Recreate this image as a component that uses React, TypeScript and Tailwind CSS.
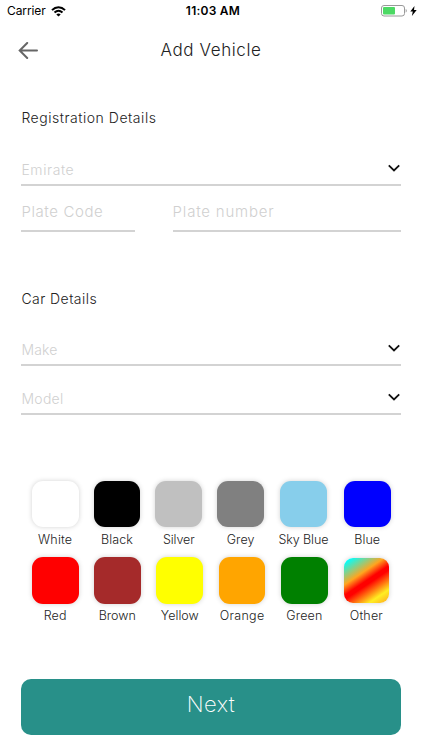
import React from 'react';
import clsx from 'clsx';

type Swatch = {
  name: string;
  color: string;
  // gap to the previous swatch
  gap?: string;
  size?: string;
  label?: string;
};

const firstRow: Swatch[] = [
  { name: 'White', color: 'bg-white' },
  { name: 'Black', color: 'bg-black', gap: 'ml-[15px]', label: 'tracking-[0.05px]' },
  { name: 'Silver', color: 'bg-[#c0c0c0]', gap: 'ml-[15px]', label: 'tracking-[-0.1px]' },
  { name: 'Grey', color: 'bg-[#808080]', gap: 'ml-[15px]', label: 'tracking-[0px]' },
  { name: 'Sky Blue', color: 'bg-[#87ceeb]', gap: 'ml-[16px]', label: 'tracking-[-0.1px]' },
  { name: 'Blue', color: 'bg-[#0000ff]', gap: 'ml-[17px]', label: 'tracking-[0px]' },
];

const secondRow: Swatch[] = [
  { name: 'Red', color: 'bg-[#ff0000]' },
  { name: 'Brown', color: 'bg-[#a52a2a]', gap: 'ml-[15.3px]', label: 'tracking-[0px]' },
  { name: 'Yellow', color: 'bg-[#ffff00]', gap: 'ml-[15.7px]', label: 'tracking-[0px]' },
  { name: 'Orange', color: 'bg-[#ffa500]', gap: 'ml-[15.5px]', label: 'tracking-[0.3px]' },
  { name: 'Green', color: 'bg-[#008000]', gap: 'ml-[15.5px]', label: 'tracking-[0.15px]' },
  {
    name: 'Other',
    color: 'bg-[linear-gradient(146deg,#00ffff_6%,#ffa51f_36%,#ff0000_50%,#ff0000_56%,#ffee22_82%,#ffa51f_100%)]',
    gap: 'ml-[16.4px]',
    size: 'w-[44.5px] h-[44.5px] mt-[1px] rounded-[9px]',
    label: 'tracking-[0.2px]',
  },
];

function Chevron() {
  return (
    <svg className="w-3 h-2 mr-[1px]" viewBox="0 0 12 8" fill="none" stroke="#111" strokeWidth="1.8">
      <path d="M.8 1.3 6 6.5l5.2-5.2" />
    </svg>
  );
}

function Field({ label, className, select }: { label: string; className?: string; select?: boolean }) {
  return (
    <div className={clsx('flex justify-between border-b-2 border-[#d3d3d3] text-[#d0d0d0] font-light leading-5', className)}>
      <span>{label}</span>
      {select && (
        <span className="pt-1 flex">
          <Chevron />
        </span>
      )}
    </div>
  );
}

function SwatchRow({ items, className }: { items: Swatch[]; className: string }) {
  return (
    <div className={clsx('flex pl-[31.8px]', className)}>
      {items.map((item) => (
        <div key={item.name} className={clsx('flex flex-col items-center shrink-0', item.gap, item.name === 'Other' ? 'w-[44.5px]' : 'w-[46.8px]')}>
          <div className="h-[47px]">
            <div className={clsx('shadow-[0_0_5px_rgba(0,0,0,0.18)]', item.color, item.size || 'w-[46.8px] h-[46.8px] rounded-[11px]')} />
          </div>
          <span className={clsx('mt-[4px] text-[12.5px] leading-4 whitespace-nowrap font-light text-[#222]', item.label || 'tracking-[0.2px]')}>
            {item.name}
          </span>
        </div>
      ))}
    </div>
  );
}

export default function App() {
  return (
    <div className="w-[422px] h-[750px] overflow-hidden bg-white font-['Inter',sans-serif] text-[#222] flex flex-col">
      <div className="h-[22px] shrink-0 grid grid-cols-3 items-center pl-[7px] pr-[5px] text-[12px] leading-4 text-black">
        <div className="flex items-center gap-[5px]">
          <span className="tracking-[-0.1px]">Carrier</span>
          <svg className="w-[15px] h-[11px]" viewBox="0 0 15 11" fill="none" stroke="#000" strokeWidth="2">
            <path d="M1 4.1C4.8.3 10.2.3 14 4.1" />
            <path d="M3.5 6.6c2.4-2.2 5.6-2.2 8 0" />
            <path d="M7.5 10.6 5.3 8.4c1.3-1.2 3.1-1.2 4.4 0z" fill="#000" stroke="none" />
          </svg>
        </div>
        <span className="text-center font-semibold pl-[2px] tracking-[0.25px]">11:03 AM</span>
        <div className="flex items-center justify-end">
          <svg className="w-[26px] h-[12px]" viewBox="0 0 26 12">
            <rect x=".5" y=".5" width="23" height="10.5" rx="2.5" fill="#fff" stroke="#999" />
            <rect x="2" y="2" width="12" height="7.5" rx="1" fill="#4cd964" />
            <path d="M24.7 4c1.4.5 1.4 3.1 0 3.6z" fill="#999" />
          </svg>
          <svg className="w-[7px] h-[10px] ml-[3px]" viewBox="0 0 7 10">
            <path d="M4.5 0 .3 5.6h2.5L1.9 10 6.7 4H4z" fill="#000" />
          </svg>
        </div>
      </div>

      <div className="h-[56px] shrink-0 grid grid-cols-3 items-center px-[18px]">
        <svg className="w-5 h-[17px]" viewBox="0 0 20 17" fill="none" stroke="#666" strokeWidth="2" strokeLinecap="round">
          <path d="M19 8.5H2M9.2 1 1.7 8.5 9.2 16" />
        </svg>
        <h1 className="text-center text-[17px] leading-6 font-light tracking-[0.6px] whitespace-nowrap">Add Vehicle</h1>
      </div>

      <div className="px-[21.4px] pt-[30px]">
        <h2 className="text-[14px] leading-5 font-light tracking-[0.53px]">Registration Details</h2>
        <Field label="Emirate" select className="mt-[32px] h-[26px] text-[14px] tracking-[0.6px]" />
        <div className="flex justify-between mt-[16px]">
          <Field label="Plate Code" className="w-[114px] h-[30px] text-[15px] tracking-[0.6px]" />
          <Field label="Plate number" className="w-[228px] h-[30px] text-[15px] tracking-[0.8px]" />
        </div>

        <h2 className="mt-[57px] text-[14px] leading-5 font-light tracking-[0.45px]">Car Details</h2>
        <Field label="Make" select className="mt-[31px] h-[26px] text-[14px] tracking-[0.2px]" />
        <Field label="Model" select className="mt-[23px] h-[26px] text-[14px] tracking-[0.3px]" />
      </div>

      <SwatchRow items={firstRow} className="mt-[65.5px]" />
      <SwatchRow items={secondRow} className="mt-[9.5px]" />

      <button className="mx-[21.4px] mt-[54.5px] h-[56px] shrink-0 rounded-[10px] bg-[#289089] text-white text-[22px] font-extralight tracking-[0.5px] pb-[5px]">
        Next
      </button>
    </div>
  );
}
